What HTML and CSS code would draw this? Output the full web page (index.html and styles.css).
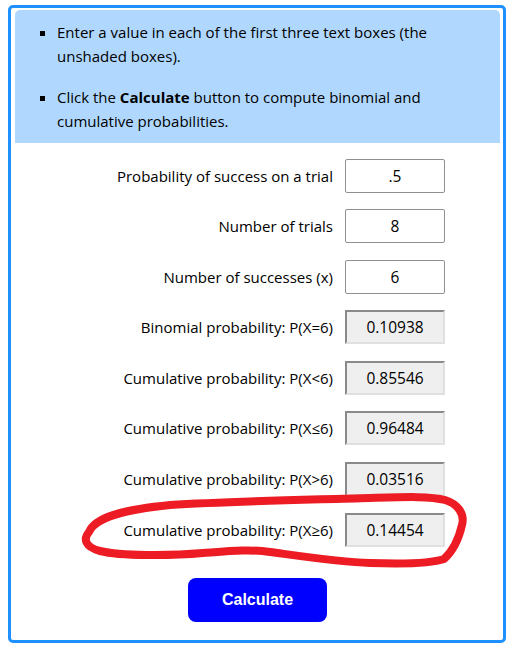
FILE: index.html
```html
<!DOCTYPE html>
<html lang="en">
<head>
<meta charset="utf-8">
<title>Binomial Probability Calculator</title>
<link rel="stylesheet" href="styles.css">
</head>
<body>
<div class="calc">
  <div class="info">
    <ul class="info-list">
      <li>Enter a value in each of the first three text boxes (the unshaded boxes).</li>
      <li>Click the <b>Calculate</b> button to compute binomial and cumulative probabilities.</li>
    </ul>
  </div>
  <div class="form">
    <label class="lbl" for="p">Probability of success on a trial</label>
    <input class="field" id="p" type="text" value=".5">
    <label class="lbl" for="n">Number of trials</label>
    <input class="field" id="n" type="text" value="8">
    <label class="lbl" for="x">Number of successes (x)</label>
    <input class="field" id="x" type="text" value="6">
    <label class="lbl" for="r1">Binomial probability: P(X=6)</label>
    <input class="field out" id="r1" type="text" value="0.10938" readonly>
    <label class="lbl" for="r2">Cumulative probability: P(X&lt;6)</label>
    <input class="field out" id="r2" type="text" value="0.85546" readonly>
    <label class="lbl" for="r3">Cumulative probability: P(X&le;6)</label>
    <input class="field out" id="r3" type="text" value="0.96484" readonly>
    <label class="lbl" for="r4">Cumulative probability: P(X&gt;6)</label>
    <input class="field out" id="r4" type="text" value="0.03516" readonly>
    <label class="lbl" for="r5">Cumulative probability: P(X&ge;6)</label>
    <input class="field out" id="r5" type="text" value="0.14454" readonly>
  </div>
  <div class="actions">
    <button class="btn" type="button">Calculate</button>
  </div>
</div>
<svg class="annot" width="514" height="648" viewBox="0 0 514 648" aria-hidden="true">
  <path d="M 89 532 C 95 518, 120 510, 170 505 C 230 501, 300 500, 370 498 C 405 497, 430 496, 445 500 C 458 504, 465 514, 462 525 C 459 538, 453 551, 444 559 C 430 564, 400 564, 370 563 C 340 562, 300 556, 270 552 C 250 549, 230 551, 203 553 C 170 556, 120 556, 100 551 C 85 547, 83 539, 89 532 Z" />
</svg>
</body>
</html>
```

FILE: styles.css
```css
* {
  box-sizing: border-box;
}

html, body {
  margin: 0;
  padding: 0;
  background: #ffffff;
}

body {
  position: relative;
  width: 514px;
  height: 648px;
  overflow: hidden;
  font-family: "Open Sans", "Noto Sans", sans-serif;
  font-size: 15px;
  color: #000000;
}

.calc {
  margin: 5px 8px 0;
  border: 3px solid #1e90ff;
  border-radius: 5px;
  padding: 2px 3px 18px 4px;
  display: flex;
  flex-direction: column;
}

.info {
  background: #b0d8ff;
  border-radius: 5px 5px 0 0;
}

.info-list {
  margin: 0;
  padding: 10px 10px 9px 42px;
  list-style: square;
  line-height: 24.4px;
}

.info-list li + li {
  margin-top: 16px;
}

.form {
  margin-top: 16px;
  display: grid;
  grid-template-columns: 1fr 100px;
  column-gap: 12px;
  row-gap: 16.57px;
  padding-right: 55px;
  align-items: center;
}

.lbl {
  text-align: right;
  white-space: nowrap;
}

.field {
  width: 100px;
  height: 34px;
  margin: 0;
  padding: 0 4px;
  border: 1px solid #909090;
  border-radius: 2px;
  background: #ffffff;
  font-family: inherit;
  font-size: 15.5px;
  color: #000000;
  text-align: center;
  outline: none;
}

.field.out {
  background: #efefef;
  border: 2px solid;
  border-color: #8a8a8a #e0e0e0 #e0e0e0 #8a8a8a;
  border-radius: 0;
}

.actions {
  margin-top: 31px;
  display: flex;
  justify-content: center;
}

.btn {
  width: 139px;
  height: 44px;
  border: none;
  border-radius: 8px;
  background: #0000ff;
  color: #ffffff;
  font-family: "Liberation Sans", Arial, sans-serif;
  font-weight: bold;
  font-size: 16px;
  cursor: pointer;
}

.annot {
  position: absolute;
  top: 0;
  left: 0;
  pointer-events: none;
}

.annot path {
  fill: none;
  stroke: #ed1c24;
  stroke-width: 8;
  stroke-linejoin: round;
  stroke-linecap: round;
}
```
